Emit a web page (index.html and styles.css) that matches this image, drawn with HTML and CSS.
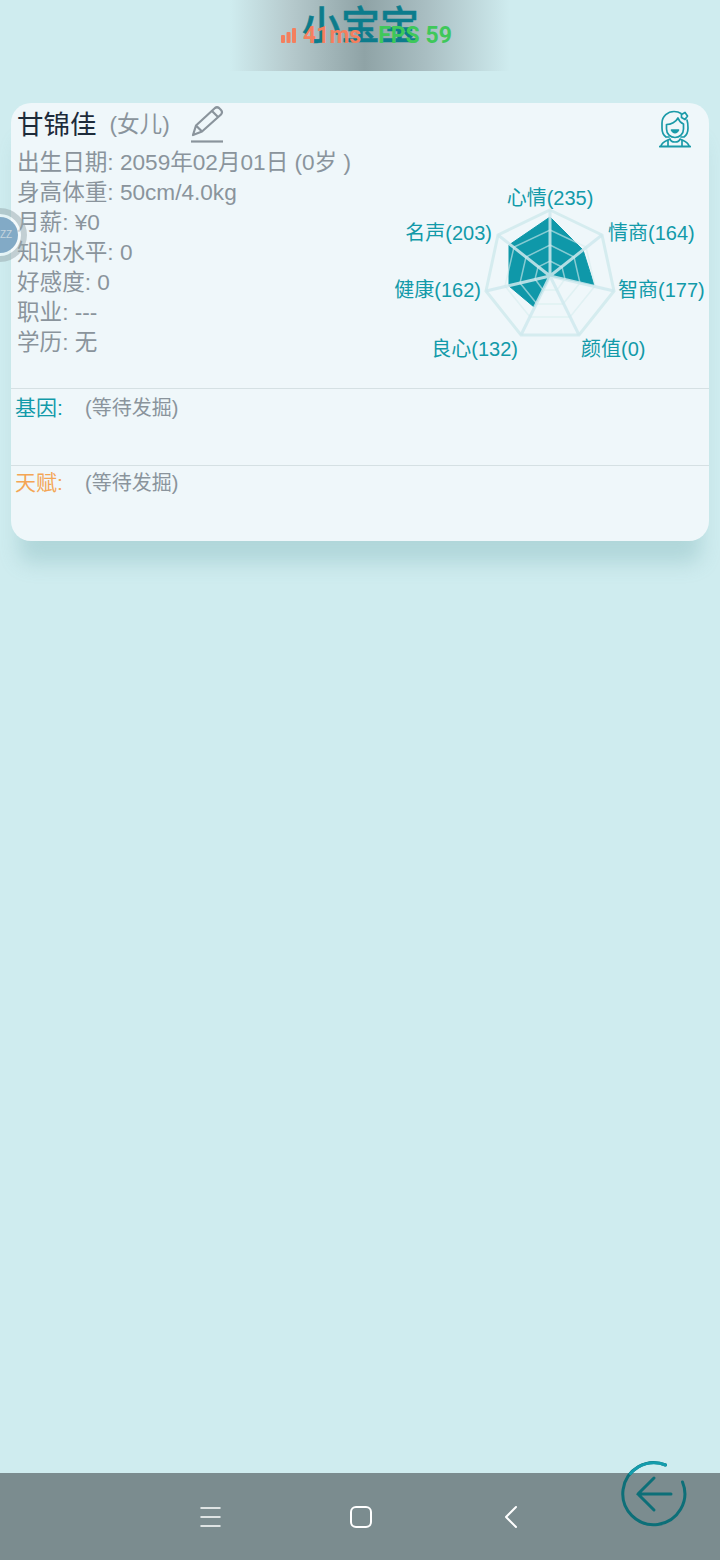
FILE: index.html
```html
<!DOCTYPE html>
<html lang="zh">
<head>
<meta charset="utf-8">
<title>小宝宝</title>
<link rel="stylesheet" href="styles.css">
</head>
<body>
<div class="page">
  <header class="topbar">
    <div class="title">小宝宝</div>
    <div class="stats">
      <svg class="signal" width="15" height="16" viewBox="0 0 15 16"><rect x="0" y="7" width="4" height="8" rx="1"/><rect x="5.500" y="4" width="4" height="11" rx="1"/><rect x="11" y="0" width="4" height="15" rx="1"/></svg>
      <span class="ping">41ms</span>
      <span class="fps">FPS 59</span>
    </div>
  </header>

  <main class="card">
    <section class="profile">
      <div class="info">
        <div class="name-row">
          <span class="name">甘锦佳</span>
          <span class="relation">(女儿)</span>
          <svg class="edit" width="34" height="38" viewBox="0 0 34 38" fill="none" stroke="#8a949c" stroke-width="2.200" stroke-linejoin="round"><path d="M3 30 L6 20.500 L25 3 Q27 1.500 29 3 L31 5 Q33 7 31 9.500 L12 26.500 Z M22 6 L28 12 M6 20.500 L12 26.500"/><path d="M1 36.500 H33"/></svg>
        </div>
        <div class="line">出生日期: 2059年02月01日 (0岁 )</div>
        <div class="line">身高体重: 50cm/4.0kg</div>
        <div class="line">月薪: ¥0</div>
        <div class="line">知识水平: 0</div>
        <div class="line">好感度: 0</div>
        <div class="line">职业: ---</div>
        <div class="line">学历: 无</div>
      </div>
      <div class="side">
        <svg class="avatar" width="32" height="38" viewBox="0 0 32 38" fill="none" stroke="#1a9aa8" stroke-width="1.700" stroke-linecap="round" stroke-linejoin="round">
          <path d="M7 27 C4 25 3 22 3 18 V13 C3 6 9 1.500 15 1.500 C18 1.500 20 2 22 3.500 M28 10 C29 13 29 15 29 18 C29 22 28 25 25 27 H22 M7 27 H10"/>
          <path d="M7.500 19 V14.500 C12 14.500 17 12 19 8 C20 11 22 13 24.500 14 V19 C24.500 24 20.500 27.500 16 27.500 C11.500 27.500 7.500 24 7.500 19 Z"/>
          <path class="smile" d="M12.500 20 C14 23.500 18 23.500 19.500 20 Z"/>
          <path d="M22.500 4.500 L26 2.500 L28.500 6 L26 9.500 L22.500 7.500 Z"/>
          <path d="M2 36 C3 32 7 31 11 29 C12 33 20 33 21 29 C25 31 29 32 30 36 M9 30 V36 M23 30 V36"/>
          <path class="avatar-base" d="M1 36.500 H31"/>
        </svg>
        <svg class="radar" width="330" height="190" viewBox="-6 2 330 190">
          <polygon class="data" points="165,42 198,75 209,110 165,101 149,132 124,111 124,70"/>
          <g class="grid">
            <polygon class="ring-outer" points="165,35 217,60 229,116 194,160 136,160 101,116 113,60"/>
            <polygon points="165,55 201,72 210,111 185,142 145,142 120,111 129,72"/>
            <polygon points="165,70 189,82 195,108 178,129 152,129 135,108 141,82"/>
            <polygon points="165,86 177,92 180,104 172,115 158,115 150,104 153,92"/>
          </g>
          <path class="spokes" d="M165 101 V35 M165 101 L217 60 M165 101 L229 116 M165 101 L194 160 M165 101 L136 160 M165 101 L101 116 M165 101 L113 60"/>
          <text x="165" y="30" text-anchor="middle">心情(235)</text>
          <text x="223" y="65">情商(164)</text>
          <text x="233" y="122">智商(177)</text>
          <text x="196" y="181">颜值(0)</text>
          <text x="133" y="181" text-anchor="end">良心(132)</text>
          <text x="96" y="122" text-anchor="end">健康(162)</text>
          <text x="107" y="65" text-anchor="end">名声(203)</text>
        </svg>
      </div>
    </section>
    <section class="row gene">
      <span class="label">基因:</span>
      <span class="value">(等待发掘)</span>
    </section>
    <section class="row talent">
      <span class="label">天赋:</span>
      <span class="value">(等待发掘)</span>
    </section>
  </main>

  <div class="spacer"></div>

  <nav class="navbar">
    <svg width="24" height="24" viewBox="0 0 24 24" fill="none" stroke="#fff" stroke-width="1.500" stroke-linecap="round"><path d="M2 3 H21 M2 12 H21 M2 21 H21"/></svg>
    <svg width="24" height="24" viewBox="0 0 24 24" fill="none" stroke="#fff" stroke-width="2"><rect x="2" y="2" width="20" height="20" rx="5"/></svg>
    <svg width="24" height="24" viewBox="0 0 24 24" fill="none" stroke="#fff" stroke-width="2" stroke-linecap="round" stroke-linejoin="round"><path d="M17 2 L7 12 L17 22"/></svg>
  </nav>

  <div class="floater"><span>ZZ</span></div>

  <svg class="back" width="70" height="68" viewBox="0 0 70 68" fill="none" stroke-linecap="round" stroke-width="3" stroke="#0d6f78">
    <path d="M46.500 5 A31 31 0 1 0 63.500 22"/>
    <path class="back-tip" d="M46.500 5 A31 31 0 0 0 11.500 13.500"/>
    <path d="M52 34 H19 M35 18 L19 34 L35 50"/>
  </svg>
</div>
</body>
</html>
```
FILE: styles.css
```css
* { box-sizing: border-box; }
html, body { margin: 0; padding: 0; }
body {
  background: #cfecef;
  font-family: "Liberation Sans", "Noto Sans CJK SC", sans-serif;
}
.page {
  position: relative;
  width: 720px;
  height: 1560px;
  display: flex;
  flex-direction: column;
  overflow: hidden;
}
.topbar {
  position: relative;
  flex: none;
  width: 280px;
  height: 71px;
  margin: 0 0 32px 230px;
  padding-left: 72px;
  background: linear-gradient(90deg, #cfecef 0%, #b5c9cc 22%, #8fa3a6 48%, #a9bec2 70%, #cfecef 100%);
  display: flex;
}
.title {
  color: #0c7c8c;
  font-size: 39px;
  line-height: 52px;
  font-weight: 500;
  -webkit-text-stroke: 0.5px #0c7c8c;
}
.stats {
  position: absolute;
  left: 51px;
  top: 22px;
  display: flex;
  align-items: center;
  font-family: Roboto, "Liberation Sans", sans-serif;
  font-weight: 700;
  font-size: 23px;
  line-height: 28px;
}
.signal { fill: #f47f5e; margin-right: 7px; }
.ping { color: #f47f5e; margin-right: 17px; }
.fps { color: #3fc85a; }
.card {
  flex: none;
  width: 698px;
  height: 438px;
  margin-left: 11px;
  background: #eff7fa;
  border-radius: 20px;
  box-shadow: 0 30px 20px -8px rgba(100, 160, 165, 0.28);
  display: flex;
  flex-direction: column;
}
.profile {
  flex: none;
  height: 286px;
  display: flex;
  justify-content: space-between;
  border-bottom: 1px solid #d5e0e3;
}
.info { padding: 0 0 0 6px; }
.name-row {
  height: 42px;
  margin-bottom: 3px;
  display: flex;
  align-items: center;
}
.name {
  color: #1d2b3a;
  font-size: 26.500px;
  margin-right: 13px;
  margin-bottom: 4px;
}
.relation {
  color: #8a949c;
  font-size: 22.600px;
  margin-right: 20px;
  margin-bottom: 4px;
}
.line {
  color: #8a949c;
  font-size: 22.600px;
  line-height: 30px;
  white-space: nowrap;
}
.side {
  width: 330px;
  display: flex;
  flex-direction: column;
  align-items: flex-end;
}
.avatar { margin: 7px 18px 0 0; }
.avatar-base { stroke-width: 2.200; }
.smile { fill: #1a9aa8; }
.radar { margin-top: 29px; }
.radar text {
  fill: #129aa9;
  font-size: 20px;
  font-family: "Liberation Sans", "Noto Sans CJK SC", sans-serif;
}
.data { fill: #0f98a9; stroke: #0f98a9; stroke-width: 1; }
.grid polygon { fill: none; stroke: #d5ecef; stroke-opacity: 0.6; stroke-width: 1.500; }
.grid .ring-outer { stroke-opacity: 1; stroke-width: 3; }
.spokes { fill: none; stroke: #cfe9ed; stroke-width: 3; stroke-opacity: 0.85; }
.row {
  display: flex;
  flex: none;
  padding-left: 4px;
}
.gene {
  height: 77px;
  border-bottom: 1px solid #d5e0e3;
  padding-top: 4px;
}
.talent { padding-top: 2px; }
.label { width: 70px; line-height: 30px; font-size: 21px; }
.gene .label { color: #129aa9; }
.talent .label { color: #f4a655; }
.value { color: #8a949c; line-height: 30px; font-size: 20px; }
.spacer { flex: 1; }
.navbar {
  flex: none;
  height: 87px;
  background: #7b8c8f;
  display: flex;
  align-items: center;
  gap: 126px;
  padding: 0 0 0 199px;
}
.floater {
  position: absolute;
  left: -27px;
  top: 208px;
  width: 54px;
  height: 54px;
  border-radius: 50%;
  border: 6px solid rgba(150, 168, 172, 0.5);
  background: rgba(245, 250, 252, 0.6);
  background-clip: padding-box;
  display: flex;
  align-items: center;
  justify-content: center;
}
.floater span {
  width: 36px;
  height: 36px;
  flex: none;
  border-radius: 50%;
  background: #82aac6;
  color: #c5d5de;
  font-size: 10px;
  line-height: 36px;
  padding-left: 18px;
  white-space: nowrap;
}
.back {
  position: absolute;
  left: 619px;
  top: 1460px;
}
.back-tip { stroke: #149cac; }
```
